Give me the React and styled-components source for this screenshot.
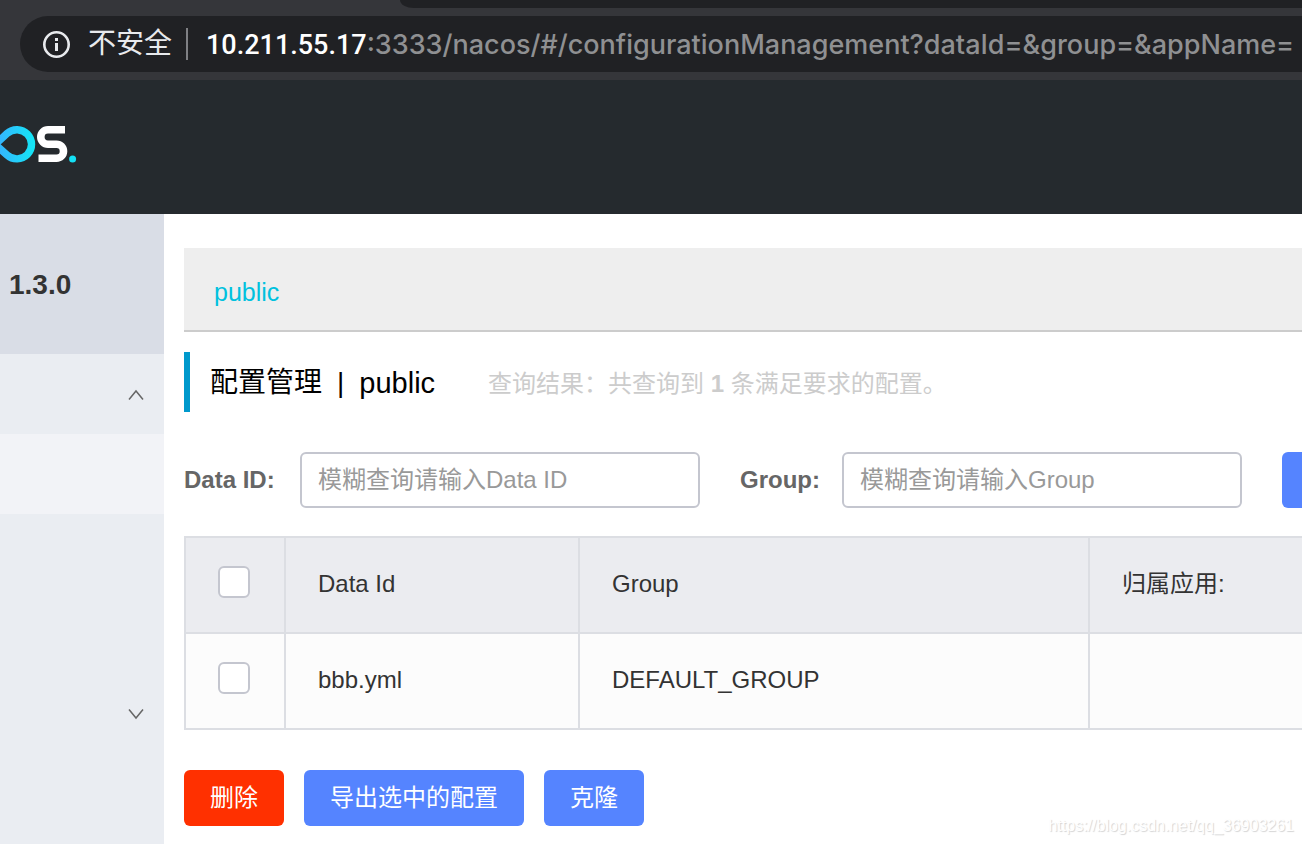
import React from 'react';
import styled, { createGlobalStyle } from 'styled-components';

const GlobalStyle = createGlobalStyle`
  * {
    box-sizing: border-box;
  }

  body {
    margin: 0;
    background: #fff;
    color: #333;
    font-family: 'Liberation Sans', 'Noto Sans CJK SC', sans-serif;
    font-size: 24px;
    line-height: 32px;
  }

  svg {
    flex: none;
  }
`;

const Page = styled.div`
  position: relative;
  display: flex;
  flex-direction: column;
  min-height: 100vh;
  overflow: hidden;
`;

/* browser bar */

const Browser = styled.div`
  padding-bottom: 8px;
  background: #35363a;
`;

const TabStrip = styled.div`
  height: 8px;
  margin-left: 400px;
  border-bottom-left-radius: 14px 8px;
  background: #202124;
`;

const AddressBar = styled.div`
  display: flex;
  align-items: center;
  height: 56px;
  margin: 8px 0 0 20px;
  padding-left: 22px;
  border-radius: 28px 0 0 28px;
  background: #202124;
  white-space: nowrap;
  overflow: hidden;
`;

const Security = styled.span`
  margin-left: 18px;
  padding-right: 14px;
  border-right: 2px solid #7f8084;
  color: #e8eaed;
  font-size: 28px;
`;

const Url = styled.span`
  margin-left: 18px;
  padding-top: 2px;
  color: #8f9092;
  font-family: Inter, sans-serif;
  font-size: 27px;
  font-weight: 500;
`;

const Host = styled.span`
  color: #fff;
  font-family: Roboto, sans-serif;
`;

/* nacos header */

const Header = styled.header`
  display: flex;
  align-items: center;
  height: 134px;
  padding-bottom: 6px;
  background: #252a2e;
`;

const Body = styled.div`
  display: flex;
  flex: 1;
`;

const Sidebar = styled.aside`
  flex: 0 0 164px;
  background: #eaedf2;
`;

const Version = styled.div`
  height: 140px;
  padding: 55px 9px;
  background: #d9dde6;
  font-size: 28px;
  font-weight: bold;
`;

const Menu = styled.ul`
  margin: 0;
  padding: 0;
  list-style: none;
`;

const MenuItem = styled.li`
  height: 80px;
  background: ${props => (props.$active ? '#f2f3f7' : 'transparent')};
`;

const MenuToggle = styled.button`
  display: flex;
  align-items: center;
  justify-content: flex-end;
  width: 100%;
  height: 100%;
  padding: 0 20px;
  border: 0;
  background: none;
`;

const Main = styled.main`
  flex: 1;
  min-width: 0;
  padding: 34px 0 18px 20px;
`;

const Namespaces = styled.nav`
  height: 84px;
  padding: 28px 30px;
  border-bottom: 2px solid #ccc;
  background: #eee;
`;

const NamespaceLink = styled.a`
  color: #00c1de;
  font-size: 25px;
  text-decoration: none;
`;

const TitleBar = styled.div`
  display: flex;
  align-items: baseline;
  height: 60px;
  margin-top: 20px;
  padding: 15px 0 0 20px;
  border-left: 6px solid #09c;
  white-space: nowrap;
`;

const Title = styled.h1`
  display: flex;
  gap: 15px;
  margin: 0;
  color: #000;
  font-size: 28px;
  font-weight: normal;
`;

const TitleSpace = styled.span`
  font-size: 29px;
`;

const Result = styled.p`
  margin: 0 0 0 53px;
  color: #ccc;
`;

const Search = styled.form`
  display: flex;
  align-items: center;
  height: 56px;
  margin: 40px 0 28px;
  overflow: hidden;
  white-space: nowrap;
`;

const Label = styled.label`
  flex: none;
  width: ${props => props.$width}px;
  color: #666;
  font-weight: bold;
`;

const TextInput = styled.input`
  flex: none;
  width: 400px;
  height: 56px;
  margin-right: 40px;
  padding: 0 16px;
  border: 2px solid #c4c6cf;
  border-radius: 6px;
  background: #fff;
  color: #333;
  font: inherit;

  &::placeholder {
    color: #999;
    opacity: 1;
  }
`;

const Button = styled.button`
  flex: none;
  min-width: 100px;
  height: 56px;
  padding: 0 26px;
  border: 0;
  border-radius: 6px;
  background: ${props => (props.$warning ? '#ff3000' : '#5584ff')};
  color: #fff;
  font: inherit;
`;

const Table = styled.table`
  width: 100%;
  table-layout: fixed;
  border: 2px solid #dcdee3;
  border-width: 2px 0 0 2px;
  border-spacing: 0;

  th,
  td {
    height: 96px;
    padding: 0 32px 2px;
    border: 2px solid #dcdee3;
    border-width: 0 2px 2px 0;
    font-weight: normal;
    text-align: left;
  }

  th {
    background: #ebecf0;
  }

  td {
    background: #fcfcfc;
  }

  th:last-child,
  td:last-child {
    border-right: 0;
  }
`;

const Col = styled.col`
  width: ${props => (props.$width ? `${props.$width}px` : 'auto')};
`;

const Checkbox = styled.input`
  display: block;
  appearance: none;
  width: 32px;
  height: 32px;
  margin: 0 0 4px;
  border: 2px solid #c4c6cf;
  border-radius: 6px;
  background: #fff;

  &:checked {
    background: #5584ff;
  }
`;

const Actions = styled.div`
  display: flex;
  gap: 20px;
  margin-top: 40px;
`;

const Watermark = styled.div`
  position: absolute;
  right: 8px;
  bottom: 6px;
  color: #fff;
  font-size: 16px;
  line-height: 24px;
  text-shadow: 1px 1px 1px #d4d4d4;
`;

const InfoIcon = () => (
  <svg width="28" height="28" viewBox="0 0 28 28" fill="none">
    <circle cx="14.5" cy="14.5" r="12.2" stroke="#e8eaed" strokeWidth="2.6" />
    <path d="M13 8h3v3h-3zM13 13h3v8h-3z" fill="#e8eaed" />
  </svg>
);

const Logo = () => (
  <svg width="80" height="40" viewBox="0 0 80 40" fill="none">
    <defs>
      <linearGradient id="ring" gradientUnits="userSpaceOnUse" x1="-4" y1="0" x2="34" y2="0">
        <stop offset="0" stopColor="#37b0ff" />
        <stop offset="1" stopColor="#14e6f5" />
      </linearGradient>
    </defs>
    <path d="M-4.8 20.3L7 9.6A14.6 14.6 0 1 1 7 31Z" stroke="url(#ring)" strokeWidth="7.4" />
    <path d="M65 5.8H48a7.2 7.2 0 0 0 0 14.4h8.5a7 7 0 0 1 0 14H38.5" stroke="#fff" strokeWidth="7.6" />
    <circle cx="72.6" cy="35" r="3.5" fill="#14e0f5" />
  </svg>
);

const Arrow = ({ up }) => (
  <svg width="16" height="12" viewBox="0 0 16 12" fill="none" stroke="#666" strokeWidth="1.5">
    <path d={up ? 'M1 11.5L8 3l7 8.5' : 'M1 1.5L8 10l7-8.5'} />
  </svg>
);

export default function App() {
  return (
    <Page>
      <GlobalStyle />
      <Browser>
        <TabStrip />
        <AddressBar>
          <InfoIcon />
          <Security>不安全</Security>
          <Url>
            <Host>10.211.55.17</Host>
            :3333/nacos/#/configurationManagement?dataId=&amp;group=&amp;appName=
          </Url>
        </AddressBar>
      </Browser>
      <Header>
        <Logo />
      </Header>
      <Body>
        <Sidebar>
          <Version>1.3.0</Version>
          <Menu>
            <MenuItem>
              <MenuToggle aria-expanded="true"><Arrow up /></MenuToggle>
            </MenuItem>
            <MenuItem $active />
            <MenuItem />
            <MenuItem />
            <MenuItem>
              <MenuToggle aria-expanded="false"><Arrow /></MenuToggle>
            </MenuItem>
          </Menu>
        </Sidebar>
        <Main>
          <Namespaces>
            <NamespaceLink href="#public">public</NamespaceLink>
          </Namespaces>
          <TitleBar>
            <Title>
              <span>配置管理</span>
              <span>|</span>
              <TitleSpace>public</TitleSpace>
            </Title>
            <Result>查询结果：共查询到 <strong>1</strong> 条满足要求的配置。</Result>
          </TitleBar>
          <Search>
            <Label htmlFor="dataId" $width={116}>Data ID:</Label>
            <TextInput id="dataId" placeholder="模糊查询请输入Data ID" />
            <Label htmlFor="group" $width={102}>Group:</Label>
            <TextInput id="group" placeholder="模糊查询请输入Group" />
            <Button type="submit" aria-label="查询" />
          </Search>
          <Table>
            <colgroup>
              <Col $width={100} />
              <Col $width={294} />
              <Col $width={510} />
              <Col />
            </colgroup>
            <thead>
              <tr>
                <th><Checkbox type="checkbox" aria-label="全选" /></th>
                <th>Data Id</th>
                <th>Group</th>
                <th>归属应用:</th>
              </tr>
            </thead>
            <tbody>
              <tr>
                <td><Checkbox type="checkbox" aria-label="bbb.yml" /></td>
                <td>bbb.yml</td>
                <td>DEFAULT_GROUP</td>
                <td />
              </tr>
            </tbody>
          </Table>
          <Actions>
            <Button $warning>删除</Button>
            <Button>导出选中的配置</Button>
            <Button>克隆</Button>
          </Actions>
        </Main>
      </Body>
      <Watermark>https://blog.csdn.net/qq_36903261</Watermark>
    </Page>
  );
}
